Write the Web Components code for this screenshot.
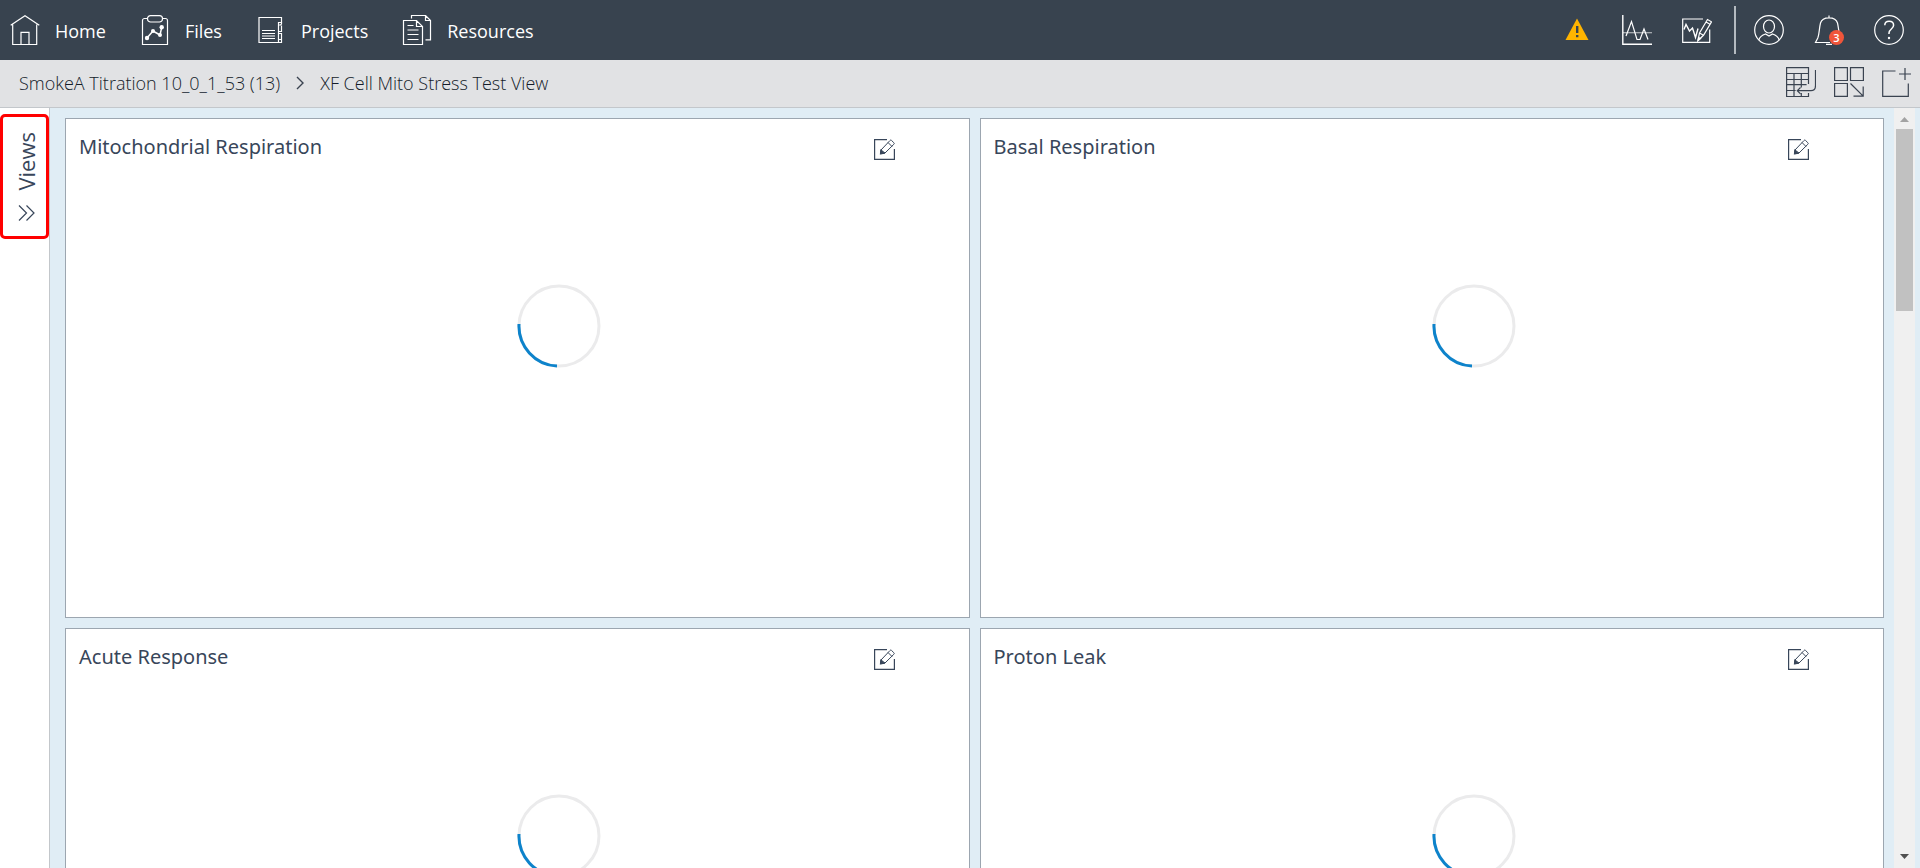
<!DOCTYPE html>
<html lang="en">
<head>
<meta charset="utf-8">
<title>XF Cell Mito Stress Test View</title>
<style>
  html, body { margin: 0; height: 100%; }
  body { font-family: "Open Sans", "Noto Sans", sans-serif; color: #38465a; overflow: hidden; }
</style>
</head>
<body>
<app-shell>
  <app-header slot="header"></app-header>
  <crumb-bar slot="crumbs"></crumb-bar>
  <views-rail slot="rail"></views-rail>
  <chart-card heading="Mitochondrial Respiration"></chart-card>
  <chart-card heading="Basal Respiration"></chart-card>
  <chart-card heading="Acute Response"></chart-card>
  <chart-card heading="Proton Leak"></chart-card>
</app-shell>

<script>
const ICONS = {
  home: '<path d="M.7 10.3 15 .8l14.300 9.500M2.700 9.500v20h24v-20M11 29.500V17.300h8v12.200"/>',
  files: '<path d="M7.500 3.500h-3a2 2 0 0 0-2 2v24h25v-24a2 2 0 0 0-2-2h-3"/><rect x="7.500" y=".6" width="15" height="6.400" rx="3"/><path stroke-width="1.500" d="m7 23 6-7 7 4 1.700-7.700"/><g fill="currentColor" stroke="none"><circle cx="7" cy="23" r="2.200"/><circle cx="13" cy="16" r="2"/><circle cx="20" cy="20" r="2"/><circle cx="21.700" cy="12.300" r="2.200"/></g>',
  projects: '<path d="M25.500 7.500v-5h-22.500v25h22.500v-2.500M6 15.500h13M6 18.500h13M6 21h13M6 23.500h13"/><path d="M22.500 27.500V25M22.500 18v-1.500M22.500 7.500h3v1.500l-1 1h-2zM22.500 10.500v6h3v-6M22.500 18.500h3v6h-3z"/>',
  resources: '<path d="M9.500 3.500v-3h14l5 5v19.300h-5M23.500.5v5h5M1.500 5.500h13l6 6v18h-19zM14.500 5.500v6h6M5.500 10.500h6M5.500 15h11M5.500 19.500h11M5.500 24.500h11"/>',
  graph: '<path stroke-width="1.400" d="M.8 0v29.200H30"/><path opacity=".6" d="M1 17.700h29"/><path d="m4 21 5.500-14.500 5.500 18h3l4-10.500 4 10.500"/>',
  annotate: '<path d="M21 4H.7v23.300h27V14.500"/><path stroke-width="1.400" d="m2 14.500 2-5 3.500 6.500 3-3 3 9.500 2.500-9"/><path d="M16 25.500 17.500 18 25.500 4.500l4 2.300L21.500 20.300zM24 7l4 2.300M17.500 18l4 2.300"/><path d="M16 25.500l.5-3 2 1z" fill="currentColor"/>',
  user: '<circle cx="15" cy="15" r="14.300"/><ellipse cx="15" cy="11.500" rx="5.500" ry="6.500"/><path d="M4.800 25C6 21 8.500 20 11.500 19l3.500 2 3.500-2c3 1 5.500 2 6.700 6"/>',
  bell: '<path d="M16 27.500H1.500l2.300-4.500C5.500 18.500 5 14 6.500 8c.8-3 4-5.200 8.500-5.200S22.700 5 23.500 8c.8 3.500 1 6 1.500 9M15 .5v2M12 29.300h6"/>',
  help: '<circle cx="15" cy="15" r="14.300"/><path stroke-width="1.500" d="M10.800 10.300c0-2.300 1.700-4 4.300-4s4.500 1.600 4.500 4c0 3.700-4.600 3.700-4.600 7.700v1"/><circle cx="15" cy="23" r="1.200" fill="currentColor" stroke="none"/>',
  table: '<path d="M22.500 17V.7H.6v28.800h21.900V26M.6 6.500h21.900M.6 12.500h21.900M.6 17.700h20M.6 23.500h9M8 6.500v23M15.300 6.500v14M15.300 26v3.500"/><path d="M29.500 3v15.500c0 3.500-1.500 5.200-4.500 5.200H11.500M14.500 20.500l-3.200 3.200 3.200 3.200"/>',
  layout: '<path d="M.6.700h12.800v12.800H.6zM16.500.700h12.900v12.800H16.500zM.6 16.500h12.800v12.800H.6zM16.500 16.500l12.700 12.700M29.200 19.500v9.700h-9.700"/>',
  add: '<path d="M13.500 4H.7v25.300h25.600V16.500M17 7h12M23 1v12"/>',
  edit: '<path stroke-width="1.200" d="M13 .6H.6v19.800h19.800V10"/><path stroke-width="1" d="m7 11 9-9.500c.6-.6 1-.6 1.600 0l2.200 2.200c.6.600.6 1 0 1.600L11 14l-4.500.8zM14 3.500l4 4M7 11l4 3"/><path d="m6.500 14.800.4-3.500 3 3z" fill="currentColor"/>'
};
const icon = (name, size = 30) =>
  `<svg viewBox="0 0 ${size} ${size}" width="${size}" height="${size}" fill="none" stroke="currentColor" stroke-width="1.200" aria-hidden="true">${ICONS[name]}</svg>`;

const define = (tag, render) => customElements.define(tag, class extends HTMLElement {
  constructor() { super(); this.attachShadow({ mode: "open" }); }
  connectedCallback() { this.shadowRoot.innerHTML = render(this); }
});

const RESET = `
  :host, * { box-sizing: border-box; }
  svg { display: block; flex: none; }
  button { border: 0; padding: 0; margin: 0; background: none; color: inherit; font: inherit; cursor: pointer; }
  a { color: inherit; text-decoration: none; }
`;

define("app-shell", () => `
  <style>${RESET}
    :host { display: flex; flex-direction: column; height: 100vh; }
    .body { flex: 1; min-height: 0; display: flex; background: #e0edf5; padding-right: 5px; }
    main { flex: 1; min-width: 0; overflow: hidden; padding: 10px 10px 10px 15px;
      display: grid; grid-template-columns: 1fr 1fr; grid-auto-rows: 500px; gap: 10px; }
  </style>
  <slot name="header"></slot>
  <slot name="crumbs"></slot>
  <div class="body">
    <slot name="rail"></slot>
    <main><slot></slot></main>
    <scroll-track></scroll-track>
  </div>`);

define("scroll-track", () => `
  <style>${RESET}
    :host { display: flex; flex-direction: column; align-items: center; width: 21px; background: #f0f0f0; color: #a3a3a3; }
    svg { fill: currentColor; }
    .thumb { width: 17px; height: 182px; background: #c1c1c1; }
    .down { margin-top: auto; color: #505050; }
  </style>
  <svg width="17" height="21"><path d="M4 14h9L8.500 9z"/></svg>
  <div class="thumb"></div>
  <svg class="down" width="17" height="21"><path d="M4 7h9l-4.500 5z"/></svg>`);

define("app-header", () => `
  <style>${RESET}
    :host { display: flex; align-items: center; justify-content: space-between; height: 60px;
      padding: 0 16px 0 10px; background: #38434f; color: #fff; }
    nav, .tools { display: flex; align-items: center; }
    nav { gap: 34px; font-size: 18px; }
    nav a { display: flex; align-items: center; gap: 15px; line-height: 24px; }
    nav span { padding-top: 2px; }
    .tools { gap: 30px; }
    .tools button { position: relative; }
    .rule { width: 2px; height: 48px; background: #b4bac0; margin: 0 -12px 0 -8px; }
    .badge { position: absolute; right: 0; bottom: 0; width: 15px; height: 15px; border-radius: 50%;
      background: #f0553a; font-size: 11px; line-height: 15px; font-weight: 600; text-align: center; }
  </style>
  <nav aria-label="Main">
    <a href="#home">${icon("home")}<span>Home</span></a>
    <a href="#files">${icon("files")}<span>Files</span></a>
    <a href="#projects">${icon("projects")}<span>Projects</span></a>
    <a href="#resources">${icon("resources")}<span>Resources</span></a>
  </nav>
  <div class="tools">
    <button aria-label="Warnings"><svg width="30" height="30"><path fill="#ffb400" d="M15 3.500 26.500 25h-23z"/><path fill="#38434f" d="M14 11h2.400v7H14zM14 20h2.400v2.300H14z"/></svg></button>
    <button aria-label="Graph">${icon("graph")}</button>
    <button aria-label="Annotate">${icon("annotate")}</button>
    <div class="rule"></div>
    <button aria-label="Account">${icon("user")}</button>
    <button aria-label="Notifications">${icon("bell")}<span class="badge">3</span></button>
    <button aria-label="Help">${icon("help")}</button>
  </div>`);

define("crumb-bar", () => `
  <style>${RESET}
    :host { display: flex; align-items: center; justify-content: space-between; height: 48px;
      padding: 0 8px 3px 19px; background: #e1e2e4; border-bottom: 1px solid #c3c7cb; color: #3a4350; }
    nav { display: flex; align-items: center; gap: 16px; padding-top: 2px; color: #141c2a;
      font-size: 18px; font-weight: 300; line-height: 24px; }
    .tools { display: flex; gap: 18px; }
  </style>
  <nav aria-label="Breadcrumb">
    <a href="#file">SmokeA Titration 10_0_1_53 (13)</a>
    <svg width="8" height="14" fill="none" stroke="#3a4350" stroke-width="1.400"><path d="m1 1 6 6-6 6"/></svg>
    <span>XF Cell Mito Stress Test View</span>
  </nav>
  <div class="tools">
    <button aria-label="Restore table">${icon("table")}</button>
    <button aria-label="Arrange layout">${icon("layout")}</button>
    <button aria-label="Add view">${icon("add")}</button>
  </div>`);

define("views-rail", () => `
  <style>${RESET}
    :host { display: block; width: 50px; background: #fff; border-right: 1px solid #c3c7cb; padding-top: 6px; }
    button { display: flex; flex-direction: column; align-items: center; justify-content: center; gap: 15px; width: 100%; height: 125px;
      padding: 0 0 0 3px; border: 3px solid #f00; border-radius: 5px; }
    span { writing-mode: vertical-rl; transform: rotate(180deg); font-size: 22px; line-height: 28px; }
  </style>
  <button aria-expanded="false"><span>Views</span>
    <svg width="17" height="16" fill="none" stroke="currentColor" stroke-width="1.200"><path d="m1 .5 7.500 7.500L1 15.500M8.500.5 16 8l-7.500 7.500"/></svg>
  </button>`);

define("chart-card", el => `
  <style>${RESET}
    :host { display: block; background: #fff; border: 1px solid #9ca6b0; }
    header { display: flex; justify-content: space-between; padding: 14px 74px 0 13px; }
    h2 { margin: 0; font-family: "Noto Sans", "Open Sans", sans-serif; font-size: 20px; line-height: 28px; font-weight: 400; }
    button { margin-top: 6px; height: 21px; }
    .spinner { display: block; margin: 123px 0 0 50%; }
  </style>
  <header><h2>${el.getAttribute("heading")}</h2><button aria-label="Edit">${icon("edit", 21)}</button></header>
  <svg class="spinner" role="img" aria-label="Loading" width="84" height="84" fill="none" stroke-width="3">
    <circle cx="42" cy="42" r="40" stroke="#ebebec"/>
    <path d="M2 40a40 40 0 0 0 38 42" stroke="#0d83cb"/>
  </svg>`);
</script>
</body>
</html>
